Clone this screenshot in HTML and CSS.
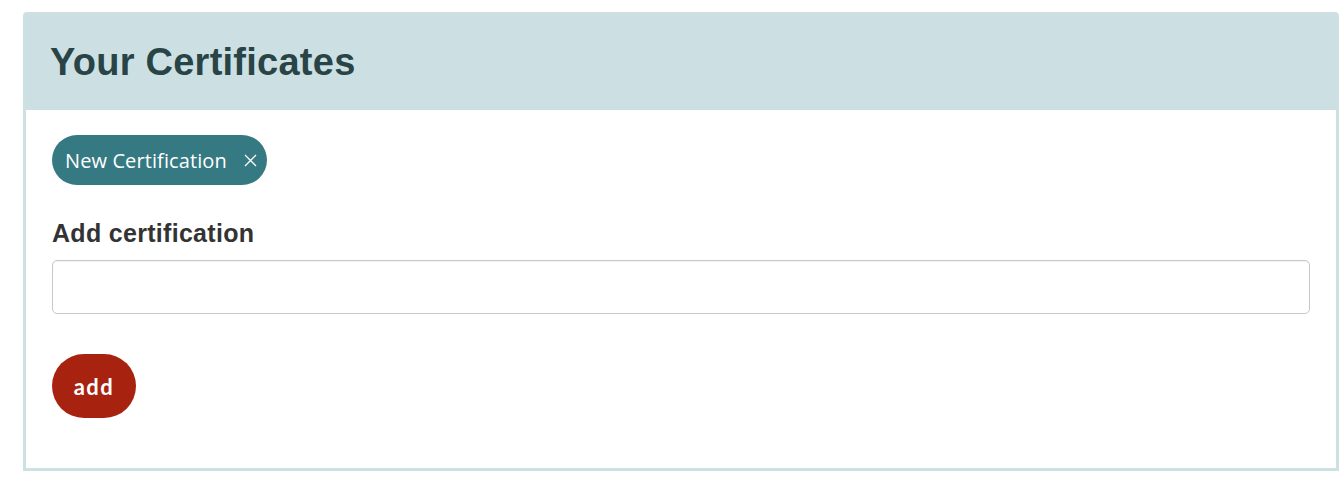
FILE: index.html
```html
<!DOCTYPE html>
<html><head>
	<meta charset="utf-8">
	<title>Your Certificates</title>
	<link rel="stylesheet" href="styles.css">
</head><body>
	<div class="card">
		<div class="card-head">
			<h2>Your Certificates</h2>
		</div>
		<div class="card-body">
			<div class="tags">
				<span class="tag">New Certification <button class="tag-remove" aria-label="remove">
					<svg width="13" height="13" viewBox="0 0 13 13"><path d="M1 1 L12 12 M12 1 L1 12" stroke="#fff" stroke-width="1.3" fill="none"/></svg>
				</button></span>
			</div>
			<label class="field-label" for="cert">Add certification</label>
			<input class="field" id="cert" type="text">
			<button class="btn-add">add</button>
		</div>
	</div>
</body>
</html>
```

FILE: styles.css
```css
* {
	box-sizing: border-box;
}
body {
	margin: 0;
	padding: 12px 5px 0 23px;
	background: #fff;
	font-family: "Liberation Sans", Arial, sans-serif;
}
.card {
	border: 3px solid #cde0e2;
	border-radius: 4px 4px 0 0;
	width: 1316px;
}
.card-head {
	background-color: #cce0e3;
	padding: 0 24px;
	height: 95px;
	display: flex;
	align-items: center;
}
.card-head h2 {
	margin: 0;
	font-size: 38px;
	letter-spacing: 0.25px;
	font-weight: bold;
	color: #294446;
}
.card-body {
	padding: 25px 26px 50px;
}
.tags {
	display: flex;
}
.tag {
	display: inline-flex;
	align-items: center;
	height: 50px;
	padding: 0 10px 0 13px;
	border-radius: 25px;
	background-color: #357a82;
	color: #fff;
	font-family: "Open Sans", sans-serif;
	font-size: 20px;
	letter-spacing: 0.1px;
}
.tag-remove {
	border: 0;
	background: none;
	padding: 0;
	margin-left: 17px;
	width: 13px;
	height: 13px;
	display: flex;
}
.field-label {
	display: block;
	margin-top: 33px;
	font-size: 25px;
	line-height: 30px;
	letter-spacing: 0.3px;
	font-weight: bold;
	color: #333;
}
.field {
	display: block;
	width: 100%;
	height: 54px;
	margin-top: 12px;
	border: 1px solid #c8c8c8;
	border-radius: 5px;
	box-shadow: inset 0 1px 1px rgba(0,0,0,.06);
}
.btn-add {
	display: block;
	margin-top: 40px;
	width: 84px;
	height: 64px;
	border: 0;
	border-radius: 32px;
	background-color: #a72310;
	color: #fff;
	font-family: "Lato", sans-serif;
	font-weight: bold;
	font-size: 22px;
	letter-spacing: 1.5px;
}
```
